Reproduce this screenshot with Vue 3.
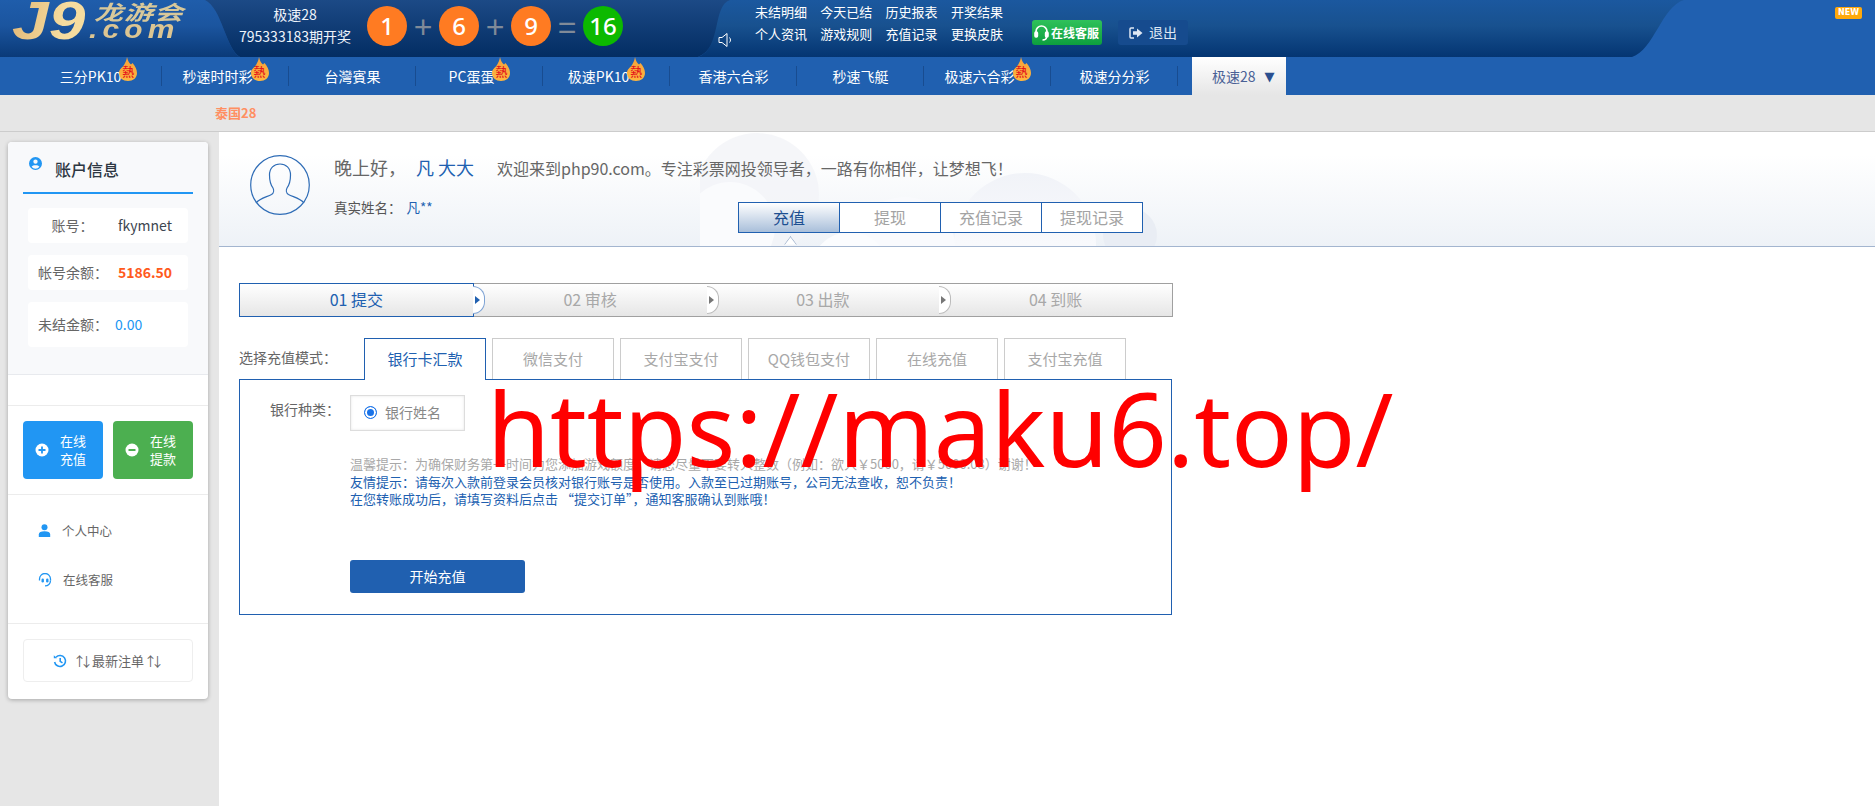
<script setup>
const links = ['未结明细','今天已结','历史报表','开奖结果','个人资讯','游戏规则','充值记录','更换皮肤']
const navItems = [
  { t:'三分PK10', hot:true },{ t:'秒速时时彩', hot:true },{ t:'台灣賓果' },{ t:'PC蛋蛋', hot:true },
  { t:'极速PK10', hot:true },{ t:'香港六合彩' },{ t:'秒速飞艇' },{ t:'极速六合彩', hot:true },{ t:'极速分分彩' }
]
const steps = ['01 提交','02 审核','03 出款','04 到账']
const payTabs = ['银行卡汇款','微信支付','支付宝支付','QQ钱包支付','在线充值','支付宝充值']
const topTabs = ['充值','提现','充值记录','提现记录']
</script>

<template>
  <div class="page">
    <header class="head">
      <svg class="head-bg" width="1875" height="57" viewBox="0 0 1875 57" preserveAspectRatio="none">
        <defs>
          <linearGradient id="g1" x1="0" y1="0" x2="0" y2="1"><stop offset="0" stop-color="#1f5dab"/><stop offset=".45" stop-color="#1b559f"/><stop offset="1" stop-color="#0a3a78"/></linearGradient>
          <linearGradient id="g2" x1="0" y1="0" x2="0" y2="1"><stop offset="0" stop-color="#1c4a86"/><stop offset="1" stop-color="#032d63"/></linearGradient>
          <linearGradient id="g3" x1="0" y1="0" x2="0" y2="1"><stop offset="0" stop-color="#1b589f"/><stop offset=".45" stop-color="#18518f"/><stop offset="1" stop-color="#043572"/></linearGradient>
        </defs>
        <rect width="1875" height="57" fill="#2060b0"/>
        <path d="M0 0H205C222 8 226 50 240 57H0Z" fill="url(#g1)"/>
        <path d="M205 0H740C715 6 722 48 698 57H240C226 50 222 8 205 0Z" fill="url(#g2)"/>
        <path d="M730 0H1684C1662 6 1654 50 1632 57H698C722 48 712 6 730 0Z" fill="url(#g3)"/>
      </svg>
      <div class="logo">
        <span class="logo-j9">J9</span>
        <span class="logo-cn">龙游会</span>
        <span class="logo-com">.com</span>
      </div>
      <div class="draw">
        <div>极速28</div>
        <div>795333183期开奖</div>
      </div>
      <div class="balls">
        <span class="ball">1</span><span class="op">+</span>
        <span class="ball">6</span><span class="op">+</span>
        <span class="ball">9</span><span class="op">=</span>
        <span class="ball green">16</span>
      </div>
      <svg class="speaker" width="16" height="16" viewBox="0 0 16 16" fill="none" stroke="#fff" stroke-width="1">
        <path d="M1 5.5H4L9 1.5V14.5L4 10.5H1Z"/>
        <path d="M11.5 5.5C12.8 7 12.8 9 11.5 10.5"/>
      </svg>
      <div class="links">
        <span v-for="l in links" :key="l">{{ l }}</span>
      </div>
      <div class="svc">
        <svg width="15" height="18" viewBox="0 0 15 18" fill="none" stroke="#fff" stroke-width="1.6">
          <path d="M2 10V7.5a5.5 5.5 0 0 1 11 0V10"/>
          <rect x="1" y="8" width="2.4" height="5" rx="1" fill="#fff"/>
          <rect x="11.6" y="8" width="2.4" height="5" rx="1" fill="#fff"/>
          <path d="M12.5 13c0 2-2 3-4 3"/>
        </svg>
        <span>在线客服</span>
      </div>
      <div class="exit">
        <svg width="14" height="12" viewBox="0 0 14 12">
          <path d="M5 1H2a1 1 0 0 0-1 1v8a1 1 0 0 0 1 1h3" fill="none" stroke="#dfe8f4" stroke-width="1.5"/>
          <path d="M4 4.3H8V1.5L13.5 6 8 10.500V7.700H4Z" fill="#dfe8f4"/>
        </svg>
        <span>退出</span>
      </div>
      <span class="new">NEW</span>
    </header>

    <nav class="nav">
      <div v-for="n in navItems" :key="n.t" class="nav-item">
        <span>{{ n.t }}</span>
        <span v-if="n.hot" class="flame">
          <svg width="18" height="25" viewBox="0 0 18 25">
            <defs><linearGradient id="fl" x1="0" y1="0" x2="0" y2="1"><stop offset="0" stop-color="#f7a23a"/><stop offset="1" stop-color="#fdb53f"/></linearGradient></defs>
            <path d="M8 0C9 4 10 6 12 7.500L13.500 6C16 9 18 12 18 16C18 21 14 24 9 24C4 24 0 21 0 16C0 12 3 11 5 8C6.500 5.500 7.500 3 8 0Z" fill="url(#fl)"/>
          </svg>
          <b>熱</b>
        </span>
      </div>
      <div class="nav-active"><span>极速28</span><i>▼</i></div>
    </nav>

    <div class="subbar">泰国28</div>

    <div class="body">
      <aside class="side">
        <div class="card">
          <section class="acct">
            <div class="title">
              <svg width="13" height="13" viewBox="0 0 24 24"><path fill="#2196f3" d="M12 0a12 12 0 1 0 0 24 12 12 0 0 0 0-24Zm0 4.500a4 4 0 1 1 0 8 4 4 0 0 1 0-8Zm0 17a9.500 9.500 0 0 1-7.300-3.400C5.500 15.800 9 15 12 15s6.500.8 7.300 3.100A9.500 9.500 0 0 1 12 21.500Z"/></svg>
              <span>账户信息</span>
            </div>
            <div class="rows">
              <div class="row"><label class="one">账号：</label><span class="val">fkymnet</span></div>
              <div class="row"><label>帐号余额：</label><span class="val money">5186.50</span></div>
              <div class="row tall"><label>未结金额：</label><span class="val pending">0.00</span></div>
            </div>
          </section>
          <div class="blank"></div>
          <section class="acts">
            <button class="act blue">
              <svg width="14" height="14" viewBox="0 0 14 14"><circle cx="7" cy="7" r="6.500" fill="#fff"/><path d="M7 3.500V10.500M3.500 7H10.500" stroke="#2196f3" stroke-width="1.800"/></svg>
              <span>在线<br>充值</span>
            </button>
            <button class="act green">
              <svg width="14" height="14" viewBox="0 0 14 14"><circle cx="7" cy="7" r="6.500" fill="#fff"/><path d="M3.500 7H10.500" stroke="#4caf50" stroke-width="2"/></svg>
              <span>在线<br>提款</span>
            </button>
          </section>
          <section class="menu">
            <div class="menu-item">
              <svg width="13" height="13" viewBox="0 0 13 13"><circle cx="6.500" cy="3.300" r="3" fill="#2196f3"/><path d="M.8 13V10.500C.8 8.300 3 7.200 6.500 7.200S12.200 8.300 12.200 10.500V13Z" fill="#2196f3"/></svg>
              <span>个人中心</span>
            </div>
            <div class="menu-item">
              <svg width="14" height="14" viewBox="0 0 14 14" fill="none" stroke="#2196f3" stroke-width="1.300">
                <path d="M1.500 7.500V6a5.500 5.500 0 0 1 11 0v1.500"/>
                <rect x="3.500" y="5.500" width="2.400" height="4" rx="1.200" fill="#2196f3" stroke="none"/>
                <rect x="8.100" y="5.500" width="2.400" height="4" rx="1.200" fill="#2196f3" stroke="none"/>
                <path d="M12.500 7.500C12.500 11 10 12.800 7 12.800"/>
              </svg>
              <span>在线客服</span>
            </div>
          </section>
          <section class="latest">
            <button class="latest-btn">
              <svg width="14" height="14" viewBox="0 0 14 14" fill="none" stroke="#2196f3" stroke-width="1.600">
                <path d="M3 3.200A5.500 5.500 0 1 1 1.600 8"/>
                <path d="M7.200 4V7.300L9.500 8.800"/>
                <path d="M.8 1.200V4.300H3.900" stroke="none" fill="#2196f3"/>
              </svg>
              <span class="latest-text"><b>↑↓</b>最新注单<b>↑↓</b></span>
            </button>
          </section>
        </div>
      </aside>

      <main class="main">
        <div class="banner">
          <svg class="clouds" width="520" height="114" viewBox="0 0 520 114">
            <defs>
              <linearGradient id="cl" x1="0" y1="0" x2="0" y2="1"><stop offset="0" stop-color="#f1f3f8"/><stop offset=".5" stop-color="#f8f9fc"/><stop offset="1" stop-color="#f6f8fb"/></linearGradient>
            </defs>
            <circle cx="57" cy="63" r="62" fill="#f3f4f8" opacity=".8"/>
            <circle cx="30" cy="95" r="45" fill="#fafbfd"/>
            <circle cx="430" cy="103" r="27" fill="#e9edf4"/>
            <circle cx="325" cy="112" r="71" fill="url(#cl)"/>
            <circle cx="205" cy="115" r="50" fill="#f9fafd"/>
            <circle cx="150" cy="140" r="40" fill="#fbfcfe"/>
          </svg>
          <svg class="avatar" width="60" height="60" viewBox="0 0 60 60" fill="none" stroke="#2e6cb6" stroke-width="1.200">
            <circle cx="30" cy="30" r="29.300"/>
            <path d="M6 48C10 43 17 42 21.500 39.500C24 38 24 35 23 33C20 29 19.500 24 19.500 20C19.500 13 24 9 30 9S40.500 13 40.500 20C40.500 24 40 29 37 33C36 35 36 38 38.500 39.500C43 42 50 43 54 48"/>
          </svg>
          <div class="info">
            <div class="hello">
              <span class="h1">晚上好，</span><span class="h2">凡 大大</span><span class="h3">欢迎来到php90.com。专注彩票网投领导者，一路有你相伴，让梦想飞！</span>
            </div>
            <div class="info-row">
              <div class="real">真实姓名：<em>凡**</em></div>
              <div class="top-tabs">
                <span v-for="(t,i) in topTabs" :key="t" :class="['top-tab',{on:i===0}]">{{ t }}</span>
              </div>
            </div>
          </div>
          <span class="caret"></span>
        </div>

        <div class="content">
          <div class="steps">
            <div v-for="(s,i) in steps" :key="s" :class="['step',{on:i===0}]">
              <span>{{ s }}</span>
              <i v-if="i<3" class="bump"></i>
            </div>
          </div>

          <div class="pay-head">
            <div class="pay-label">选择充值模式：</div>
            <div class="pay-tabs">
              <span v-for="(t,i) in payTabs" :key="t" :class="['pay-tab',{on:i===0}]">{{ t }}</span>
            </div>
          </div>

          <div class="box">
            <div class="bank">
              <div class="bank-label">银行种类：</div>
              <div class="bank-opt"><i class="radio"></i><span>银行姓名</span></div>
            </div>
            <div class="tips">
              <p class="gray">温馨提示：为确保财务第一时间为您添加游戏额度，请您尽量不要转入整数（例如：欲入￥5000，请￥5000.08）谢谢！</p>
              <p>友情提示：请每次入款前登录会员核对银行账号是否使用。入款至已过期账号，公司无法查收，恕不负责！</p>
              <p>在您转账成功后，请填写资料后点击 “提交订单”，通知客服确认到账哦！</p>
            </div>
            <button class="start">开始充值</button>
          </div>
        </div>

        <div class="mark">https://maku6.top/</div>
      </main>
    </div>
  </div>
</template>

<style>
html, body { margin: 0; background: #fff; }
</style>

<style scoped>
* { box-sizing: border-box; }
.page { width: 1875px; height: 806px; overflow: hidden; font-family: "Noto Sans CJK SC", "Noto Sans", sans-serif; font-size: 14px; color: #666; }
.head { position: relative; height: 57px; display: flex; overflow: hidden; color: #fff; }
.head > * { position: relative; }
.head .head-bg { position: absolute; left: 0; top: 0; }
.logo { width: 239px; flex: none; }
.logo span { position: absolute; font-family: "Liberation Sans", sans-serif; font-weight: 700; font-style: italic; white-space: nowrap; }
.logo-j9 { left: 12px; top: 0; font-size: 54px; line-height: 40px; transform: scaleX(1.22); transform-origin: left top; background: linear-gradient(100deg, #e3b877, #f5dc9f 70%); -webkit-background-clip: text; background-clip: text; color: transparent; }
.logo .logo-cn { left: 94px; top: 1px; font-family: "Noto Sans CJK SC", sans-serif; font-size: 29px; line-height: 29px; color: #d8c89a; letter-spacing: 1px; transform: scaleY(.7); transform-origin: top left; }
.logo-com { left: 89px; top: 16px; font-size: 26px; line-height: 26px; letter-spacing: 4.500px; color: #dcc592; transform: scaleX(1.15); transform-origin: left top; }
.draw { width: 112px; flex: none; text-align: center; color: #eef3fa; font-size: 14px; }
.draw div { height: 22px; line-height: 22px; white-space: nowrap; }
.draw div:first-child { margin-top: 3px; }
.balls { display: flex; margin: 6px 0 0 16px; height: 40px; width: 256px; flex: none; }
.ball { width: 40px; height: 40px; border-radius: 50%; background: #ff7b22; color: #fff; font-size: 24px; font-weight: 500; line-height: 40px; text-align: center; flex: none; font-family: "Noto Sans", sans-serif; }
.ball.green { background: #0cb900; }
.op { width: 32px; text-align: center; color: #808a98; font-size: 32px; line-height: 42px; font-family: "Liberation Sans", sans-serif; }
.speaker { margin: 32px 0 0 95px; flex: none; }
.links { display: grid; grid-template-columns: repeat(4, 52px); column-gap: 13.300px; margin: 1px 0 0 21px; flex: none; align-content: start; }
.links span { font-size: 13px; line-height: 22px; height: 22px; white-space: nowrap; }
.svc { margin: 20px 0 0 29px; width: 70px; height: 25px; border-radius: 3px; background: linear-gradient(#2fc15a, #0d9f3e); display: flex; align-items: center; gap: 2px; padding-left: 2px; font-size: 12px; font-weight: 700; white-space: nowrap; flex: none; }
.exit { margin: 20px 0 0 16px; width: 70px; height: 25px; border-radius: 3px; background: #164b8e; display: flex; align-items: center; justify-content: center; gap: 6px; color: #dfe8f4; flex: none; line-height: 23px; }
.new { position: absolute !important; right: 13px; top: 7px; width: 27px; height: 12px; background: #ffa90b; border-radius: 2px; color: #fff; font: 700 8px/12px "DejaVu Sans", sans-serif; text-align: center; }

.nav { height: 38px; background: #2060b0; display: flex; padding-left: 35px; color: #fff; }
.nav-item { width: 127px; height: 38px; display: flex; justify-content: center; line-height: 38px; font-size: 14px; position: relative; white-space: nowrap; }
.nav-item::after { content: ""; position: absolute; right: 0; top: 9px; height: 20px; width: 1px; background: #184c90; }
.flame { position: relative; width: 18px; height: 25px; flex: none; display: block; margin-left: -2px; }
.flame svg { display: block; }
.flame b { position: absolute; left: 0; top: 8px; width: 18px; text-align: center; color: #e4141c; font-size: 12px; line-height: 14px; font-weight: 500; }
.nav-active { width: 94px; margin-left: 14px; height: 38px; background: linear-gradient(#fff, #e6e6e6); color: #4a6196; display: flex; align-items: center; padding-left: 20px; }
.nav-active i { font-style: normal; margin-left: 9px; font-size: 13px; color: #2a4f8f; font-family: "DejaVu Sans", sans-serif; }

.subbar { height: 37px; background: #e6e6e6; border-bottom: 1px solid #ccc; padding-left: 215px; line-height: 36px; font-size: 13px; font-weight: 700; color: #ff8f62; }

.body { display: flex; height: 674px; }
.side { width: 219px; flex: none; background: #e6e6e6; padding: 10px 0 0 8px; }
.card { width: 200px; height: 557px; background: #fff; border-radius: 4px; box-shadow: 0 1px 4px rgba(0,0,0,.28); overflow: hidden; }
.acct { height: 233px; background: #f8f9fb; border-bottom: 1px solid #e8eaee; padding-top: 1px; }
.title { position: relative; height: 51px; margin: 0 15px; border-bottom: 2px solid #2196f3; color: #2d3742; font-size: 16px; font-weight: 500; line-height: 52px; padding-left: 32px; }
.title svg { position: absolute; left: 6px; top: 14px; }
.rows { margin: 14px 20px 0; display: flex; flex-direction: column; gap: 12px; }
.row { height: 35px; background: #fff; border-radius: 4px; display: flex; align-items: center; padding: 0 0 2px 10px; }
.row.tall { height: 45px; }
.row label { width: 66px; text-align: center; color: #666; font-size: 14px; white-space: nowrap; }
.row label.one { padding-left: 3px; }
.val { margin-left: 14px; color: #3d4650; font-size: 14px; }
.money { color: #ff5a1c; font-weight: 700; }
.pending { color: #2196f3; margin-left: 11px; }
.blank { height: 31px; border-bottom: 1px solid #ececec; }
.acts { padding: 15px 15px; display: flex; gap: 10px; border-bottom: 1px solid #ececec; height: 89px; }
.act { width: 80px; height: 58px; border: 0; border-radius: 4px; color: #fff; display: flex; align-items: center; gap: 11px; padding: 0 0 0 12px; font: 13px/18px "Noto Sans CJK SC", sans-serif; text-align: center; }
.act.blue { background: #2196f3; }
.act.green { background: #4caf50; }
.menu { height: 129px; padding-top: 12px; border-bottom: 1px solid #ececec; }
.menu-item { height: 49px; display: flex; align-items: center; gap: 11px; padding: 0 0 2px 30px; font-size: 12.500px; color: #666; }
.latest { padding: 15px; }
.latest-btn { width: 170px; height: 43px; background: #fff; border: 1px solid #eee; border-radius: 4px; display: flex; align-items: center; justify-content: center; gap: 6px; color: #666; font: 13px "Noto Sans CJK SC", sans-serif; padding: 0; }
.latest-text b { font-weight: 400; letter-spacing: -6px; margin-right: 5px; }

.main { flex: 1; position: relative; background: #fff; }
.banner { position: relative; height: 115px; background: linear-gradient(#fff 20%, #eef2f7); border-bottom: 1px solid #a3b5cf; display: flex; overflow: hidden; }
.clouds { position: absolute; left: 481px; bottom: 0; }
.avatar { position: relative; margin: 23px 0 0 31px; flex: none; }
.info { position: relative; margin-left: 24px; padding-top: 22px; flex: 1; }
.hello { height: 26px; line-height: 26px; white-space: nowrap; }
.h1 { font-size: 18px; color: #666; display: inline-block; width: 82px; }
.h2 { font-size: 18px; color: #2060b0; display: inline-block; width: 81px; }
.h3 { font-size: 16px; color: #666; }
.info-row { display: flex; margin-top: 15px; }
.real { width: 404px; height: 24px; line-height: 24px; font-size: 13.500px; color: #555; }
.real em { font-style: normal; color: #2060b0; margin-left: 5px; }
.top-tabs { display: flex; margin-top: 7px; border: 1px solid #2060b0; height: 31px; width: 405px; flex: none; }
.top-tab { flex: 1; text-align: center; line-height: 29px; font-size: 16px; color: #a3a3a3; background: #fff; border-left: 1px solid #2060b0; }
.top-tab:first-child { border-left: 0; }
.top-tab.on { color: #1d4f91; background: linear-gradient(#fff, #a9bfda); }
.caret { position: absolute; left: 566px; bottom: -4px; width: 11px; height: 11px; background: #fff; border-left: 1px solid #a3b5cf; border-top: 1px solid #a3b5cf; transform: rotate(45deg) skew(8deg, 8deg); clip-path: polygon(0 0, 100% 0, 0 100%); }

.content { padding: 36px 0 0 20px; width: 954px; }
.steps { display: flex; height: 34px; width: 934px; }
.step { position: relative; flex: 1; text-align: center; line-height: 31px; font-size: 16px; color: #a8a8a8; background: linear-gradient(#fff, #e6e6e6); border: 1px solid #a0a0a0; border-left: 0; border-right: 0; }
.step:last-child { border-right: 1px solid #a0a0a0; }
.step.on { border: 1px solid #2060b0; color: #2060b0; }
.bump { position: absolute; right: -12px; top: 2px; width: 12px; height: 28px; background: #fff; border: 1px solid #bbb; border-left: 0; border-radius: 0 14px 14px 0; z-index: 1; }
.bump::after { content: ""; position: absolute; left: 2px; top: 9px; border-left: 5px solid #777; border-top: 4px solid transparent; border-bottom: 4px solid transparent; }
.on .bump { border-color: #7ea3d4; }
.on .bump::after { border-left-color: #2060b0; }

.pay-head { display: flex; margin-top: 21px; height: 41px; }
.pay-label { width: 125px; line-height: 38px; font-size: 14px; color: #666; }
.pay-tabs { display: flex; gap: 6px; }
.pay-tab { width: 122px; height: 41px; border: 1px solid #ccc; border-bottom: 0; text-align: center; line-height: 40px; font-size: 15px; color: #a8a8a8; background: #fff; }
.pay-tab.on { position: relative; z-index: 1; height: 42px; width: 122px; border: 1px solid #2060b0; border-bottom: 0; color: #2060b0; }
.box { width: 933px; height: 236px; border: 1px solid #2060b0; padding: 15px 0 0 30px; }
.bank { display: flex; }
.bank-label { width: 80px; font-size: 14px; line-height: 28px; color: #666; }
.bank-opt { width: 115px; height: 36px; border: 1px solid #ddd; box-shadow: inset 0 0 3px #e6e6e6; display: flex; align-items: center; padding: 0 0 2px 13px; font-size: 14px; color: #888; gap: 8px; }
.radio { width: 13px; height: 13px; border-radius: 50%; border: 1.500px solid #1a73e8; background: #1a73e8; box-shadow: inset 0 0 0 2px #fff; flex: none; }
.tips { margin: 24px 0 0 80px; font-size: 13px; line-height: 17.500px; color: #2060b0; white-space: nowrap; }
.tips p { margin: 0; }
.tips .gray { color: #a8a8a8; }
.start { display: block; margin: 52px 0 0 80px; width: 175px; height: 33px; border: 0; border-radius: 3px; background: #2060b0; color: #fff; font: 14px "Noto Sans CJK SC", sans-serif; }
.mark { position: absolute; left: 268px; top: 248px; font-family: "Noto Sans", sans-serif; font-size: 102px; line-height: 96px; color: #ff0000; white-space: nowrap; pointer-events: none; }
</style>
